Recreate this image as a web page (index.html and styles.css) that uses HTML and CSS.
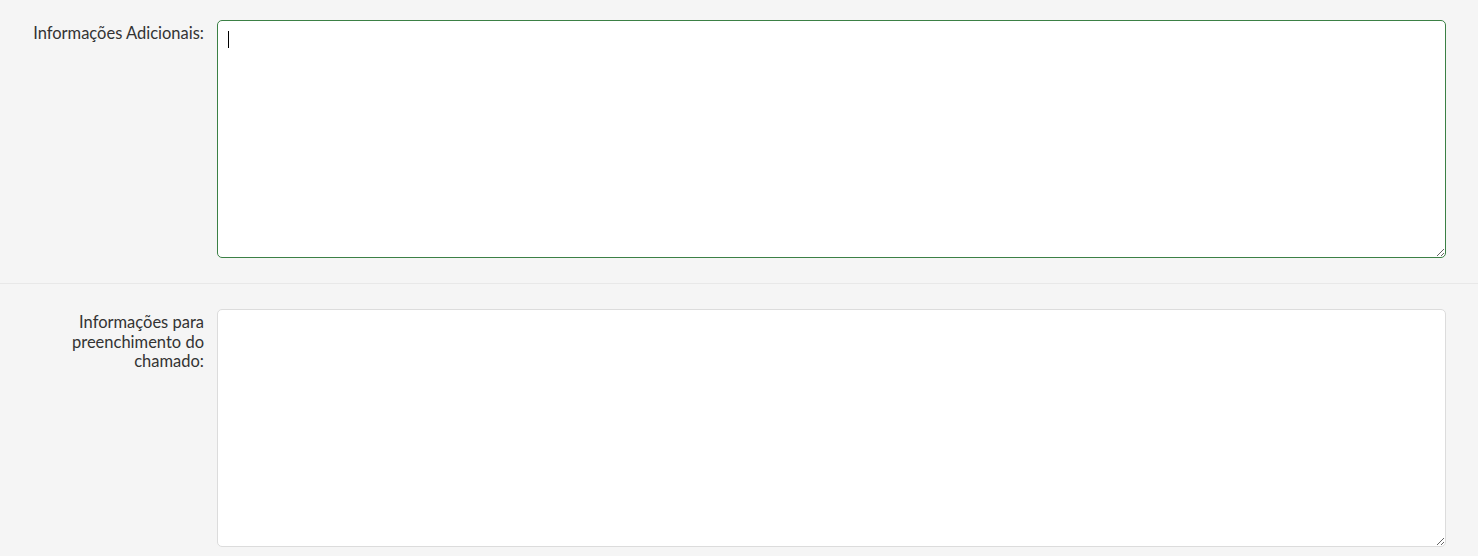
FILE: index.html
```html
<!DOCTYPE html>
<html lang="pt">
<head>
<meta charset="utf-8">
<link rel="stylesheet" href="styles.css">
</head>
<body>
<div class="form">
  <div class="row">
    <label class="label" for="info">Informações Adicionais:</label>
    <div class="field">
      <textarea id="info" class="input is-focused"></textarea>
      <span class="caret"></span>
    </div>
  </div>
  <div class="row">
    <label class="label" for="prev">Informações para preenchimento do chamado:</label>
    <div class="field">
      <textarea id="prev" class="input"></textarea>
    </div>
  </div>
</div>
</body>
</html>
```
FILE: styles.css
```css
html, body {
  margin: 0;
  padding: 0;
  background: #f5f5f5;
  font-family: Lato, "Noto Sans", sans-serif;
  font-size: 16.5px;
  color: #333;
  overflow: hidden;
}
.form {
  display: flex;
  flex-direction: column;
}
.row {
  display: flex;
  padding: 20px 32px 25px 0;
  border-bottom: 1px solid #e8e8e8;
}
.row + .row {
  padding-top: 25px;
  border-bottom: none;
}
.label {
  width: 217px;
  flex: none;
  box-sizing: border-box;
  padding: 4px 13px 0 20px;
  text-align: right;
  line-height: 19.6px;
}
.field {
  flex: 1;
  position: relative;
  display: flex;
}
.input {
  flex: 1;
  height: 238px;
  box-sizing: border-box;
  margin: 0;
  border: 1px solid #dcdcdc;
  border-radius: 5px;
  background: #fff;
  outline: none;
  font-family: inherit;
  font-size: 16.5px;
  resize: vertical;
}
.input.is-focused {
  border-color: #3b8045;
}
.caret {
  position: absolute;
  left: 11px;
  top: 11px;
  width: 1px;
  height: 17px;
  background: #000;
}
```
